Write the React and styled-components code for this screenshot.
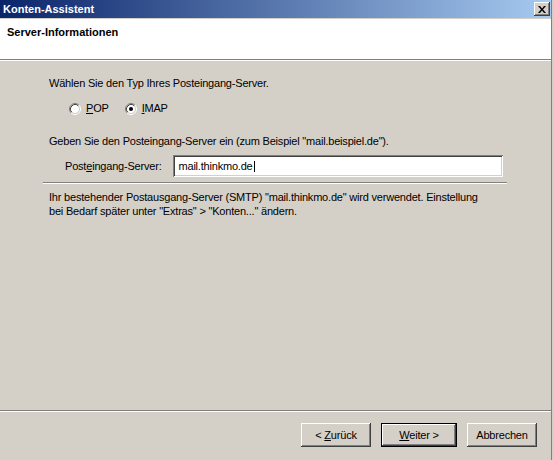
import React from "react";
import styled, { createGlobalStyle } from "styled-components";

const GlobalStyle = createGlobalStyle`
  html, body {
    margin: 0;
    padding: 0;
    background: #d4d0c8;
  }
  body {
    font-family: "Liberation Sans", Arial, sans-serif;
    font-size: 11px;
    line-height: 13px;
    color: #000;
  }
`;

const Frame = styled.div`
  width: 554px;
  height: 460px;
  box-sizing: border-box;
  display: flex;
  padding-right: 2px;
  background: #d4d0c8;
  overflow: hidden;
`;

const Dialog = styled.div`
  flex: 1;
  display: flex;
  flex-direction: column;
  border-left: 1px solid #d4d0c8;
  border-right: 1px solid #808080;
  margin-left: -1px;
`;

const TitleBar = styled.div`
  height: 18px;
  flex: none;
  display: flex;
  align-items: center;
  justify-content: space-between;
  padding: 0 1px 0 3px;
  background: linear-gradient(to right, #0a246a, #a6caf0);
  color: #fff;
  font-weight: bold;
`;

const CloseButton = styled.div`
  width: 16px;
  height: 14px;
  display: flex;
  align-items: center;
  justify-content: center;
  background: #d4d0c8;
  box-shadow: inset -1px -1px #404040, inset 1px 1px #fff,
    inset -2px -2px #808080;
`;

const Header = styled.div`
  height: 40px;
  flex: none;
  margin-top: 1px;
  box-sizing: border-box;
  padding: 7px 7px;
  background: #fff;
  font-weight: bold;
`;

const Rule = styled.div`
  height: 0;
  flex: none;
  border-top: 1px solid #808080;
  border-bottom: 1px solid #fff;
  margin: ${(p) => p.$margin || "0"};
`;

const Body = styled.div`
  flex: 1;
  padding: 16px 0 0 49px;
  letter-spacing: -0.2px;
`;

const Section = styled.div`
  width: 453px;
  display: flex;
  flex-direction: column;
`;

const Prompt = styled.div`
  margin-top: ${(p) => p.$top || 0}px;
  white-space: nowrap;
`;

const RadioRow = styled.div`
  margin-top: 12px;
  padding-left: 20px;
  height: 13px;
  display: flex;
  align-items: center;
  gap: 16px;
`;

const RadioOption = styled.label`
  display: flex;
  align-items: center;
  gap: 5px;
`;

const Accel = styled.span`
  text-decoration: underline;
  text-underline-offset: 1px;
`;

const FieldRow = styled.div`
  margin-top: 7px;
  padding-left: 16px;
  display: flex;
  align-items: center;
  gap: 11px;
`;

const FieldLabel = styled.span`
  flex: none;
  white-space: nowrap;
`;

const TextBox = styled.div`
  flex: none;
  width: 330px;
  height: 22px;
  box-sizing: border-box;
  padding: 0 6px;
  display: flex;
  align-items: center;
  white-space: nowrap;
  background: #fff;
  box-shadow: inset 1px 1px #808080, inset -1px -1px #fff,
    inset 2px 2px #404040, inset -2px -2px #d4d0c8;
`;

const Caret = styled.span`
  width: 1px;
  height: 11px;
  margin-left: 1px;
  background: #000;
`;

const Info = styled.div`
  margin-top: 6px;
  line-height: 14px;
  white-space: nowrap;
`;

const Footer = styled.div`
  height: 48px;
  flex: none;
  box-sizing: border-box;
  padding: 11px 14px 0 0;
  display: flex;
  justify-content: flex-end;
  align-items: flex-start;
  gap: 10px;
  letter-spacing: -0.2px;
`;

const Button = styled.div`
  width: ${(p) => (p.$default ? 76 : 70)}px;
  height: 24px;
  box-sizing: border-box;
  display: flex;
  align-items: center;
  justify-content: center;
  background: #d4d0c8;
  border: ${(p) => (p.$default ? "1px solid #000" : "none")};
  box-shadow: inset -1px -1px #404040, inset 1px 1px #fff,
    inset -2px -2px #808080;
`;

function Radio({ checked }) {
  return (
    <svg width="12" height="12" viewBox="0 0 12 12">
      <circle cx="6" cy="6" r="4.5" fill="#fff" />
      <path d="M2.11 9.89 A5.5 5.5 0 0 1 9.89 2.11" fill="none" stroke="#808080" />
      <path d="M9.89 2.11 A5.5 5.5 0 0 1 2.11 9.89" fill="none" stroke="#fff" />
      <path d="M2.82 9.18 A4.5 4.5 0 0 1 9.18 2.82" fill="none" stroke="#404040" />
      <path d="M9.18 2.82 A4.5 4.5 0 0 1 2.82 9.18" fill="none" stroke="#d4d0c8" />
      {checked && <circle cx="6" cy="6" r="2" fill="#000" />}
    </svg>
  );
}

function CloseGlyph() {
  return (
    <svg width="8" height="7" viewBox="0 0 8 7">
      <path d="M0 0 L2 0 L4 2.5 L6 0 L8 0 L5 3.5 L8 7 L6 7 L4 4.5 L2 7 L0 7 L3 3.5 Z" fill="#000" />
    </svg>
  );
}

export default function App() {
  return (
    <>
      <GlobalStyle />
      <Frame>
        <Dialog>
          <TitleBar>
            <span>Konten-Assistent</span>
            <CloseButton>
              <CloseGlyph />
            </CloseButton>
          </TitleBar>
          <Header>Server-Informationen</Header>
          <Rule />
          <Body>
            <Section>
              <Prompt>Wählen Sie den Typ Ihres Posteingang-Server.</Prompt>
              <RadioRow>
                <RadioOption>
                  <Radio />
                  <span>
                    <Accel>P</Accel>OP
                  </span>
                </RadioOption>
                <RadioOption>
                  <Radio checked />
                  <span>
                    <Accel>I</Accel>MAP
                  </span>
                </RadioOption>
              </RadioRow>
              <Prompt $top={20}>
                Geben Sie den Posteingang-Server ein (zum Beispiel "mail.beispiel.de").
              </Prompt>
              <FieldRow>
                <FieldLabel>
                  Post<Accel>e</Accel>ingang-Server:
                </FieldLabel>
                <TextBox>
                  mail.thinkmo.de
                  <Caret />
                </TextBox>
              </FieldRow>
              <Rule $margin="5px -5px 0 -6px" />
              <Info>
                Ihr bestehender Postausgang-Server (SMTP) "mail.thinkmo.de" wird verwendet. Einstellung
                <br />
                bei Bedarf später unter "Extras" &gt; "Konten..." ändern.
              </Info>
            </Section>
          </Body>
          <Rule />
          <Footer>
            <Button>
              <span>
                &lt; <Accel>Z</Accel>urück
              </span>
            </Button>
            <Button $default>
              <span>
                <Accel>W</Accel>eiter &gt;
              </span>
            </Button>
            <Button>Abbrechen</Button>
          </Footer>
        </Dialog>
      </Frame>
    </>
  );
}
